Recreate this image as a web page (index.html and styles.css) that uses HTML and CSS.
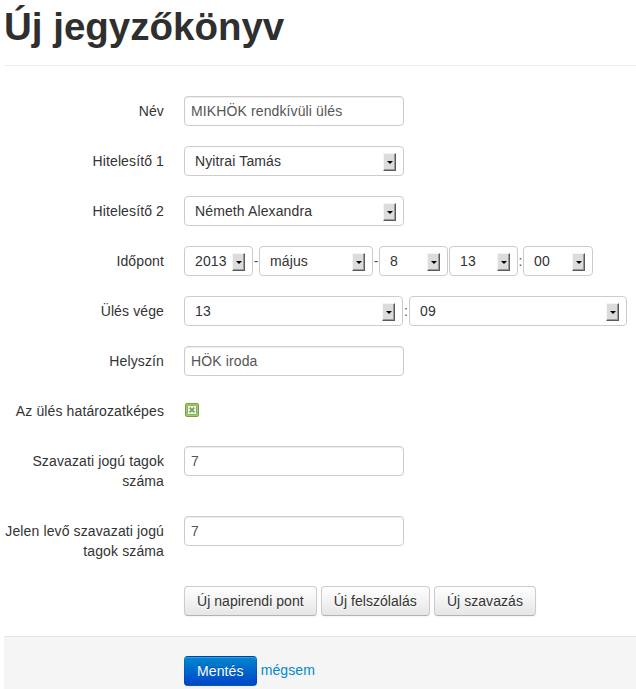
FILE: index.html
```html
<!DOCTYPE html>
<html lang="hu">
<head>
<meta charset="utf-8">
<title>Új jegyzőkönyv</title>
<link rel="stylesheet" href="styles.css">
</head>
<body>
<div class="page">
  <div class="page-header">
    <h1>Új jegyzőkönyv</h1>
  </div>
  <form class="form-horizontal">
    <div class="control-group">
      <label class="control-label">Név</label>
      <div class="controls"><div class="input">MIKHÖK rendkívüli ülés</div></div>
    </div>
    <div class="control-group">
      <label class="control-label">Hitelesítő 1</label>
      <div class="controls"><div class="select w220"><span class="val">Nyitrai Tamás</span><span class="arrow"></span></div></div>
    </div>
    <div class="control-group">
      <label class="control-label">Hitelesítő 2</label>
      <div class="controls"><div class="select w220"><span class="val">Németh Alexandra</span><span class="arrow"></span></div></div>
    </div>
    <div class="control-group">
      <label class="control-label">Időpont</label>
      <div class="controls inline">
        <div class="select w69"><span class="val">2013</span><span class="arrow"></span></div>
        <span class="sep">-</span>
        <div class="select w114"><span class="val">május</span><span class="arrow"></span></div>
        <span class="sep">-</span>
        <div class="select w69"><span class="val">8</span><span class="arrow"></span></div>
        <span class="sep sep-empty"></span>
        <div class="select w69"><span class="val">13</span><span class="arrow"></span></div>
        <span class="sep sep-colon">:</span>
        <div class="select w70"><span class="val">00</span><span class="arrow"></span></div>
      </div>
    </div>
    <div class="control-group">
      <label class="control-label">Ülés vége</label>
      <div class="controls inline">
        <div class="select w219"><span class="val">13</span><span class="arrow"></span></div>
        <span class="sep">:</span>
        <div class="select w218"><span class="val">09</span><span class="arrow"></span></div>
      </div>
    </div>
    <div class="control-group">
      <label class="control-label">Helyszín</label>
      <div class="controls"><div class="input">HÖK iroda</div></div>
    </div>
    <div class="control-group">
      <label class="control-label">Az ülés határozatképes</label>
      <div class="controls">
        <svg class="checkbox" width="14" height="14" viewBox="0 0 14 14">
          <rect x="0.5" y="0.5" width="13" height="13" rx="1.5" fill="#9fcb6b" stroke="#74a342"/>
          <rect x="2.5" y="2.5" width="9" height="9" rx="1" fill="#eef6e4" stroke="#88b458"/>
          <path d="M4.6 4.6 L9.4 9.4 M9.4 4.6 L4.6 9.4" stroke="#7d9c63" stroke-width="1.7"/>
        </svg>
      </div>
    </div>
    <div class="control-group">
      <label class="control-label">Szavazati jogú tagok száma</label>
      <div class="controls"><div class="input">7</div></div>
    </div>
    <div class="control-group">
      <label class="control-label">Jelen levő szavazati jogú tagok száma</label>
      <div class="controls"><div class="input">7</div></div>
    </div>
    <div class="control-group">
      <div class="controls buttons">
        <button type="button" class="btn">Új napirendi pont</button>
        <button type="button" class="btn">Új felszólalás</button>
        <button type="button" class="btn">Új szavazás</button>
      </div>
    </div>
    <div class="form-actions">
      <button type="button" class="btn btn-primary">Mentés</button>
      <a class="link" href="#">mégsem</a>
    </div>
  </form>
</div>
</body>
</html>
```

FILE: styles.css
```css
html, body {
  margin: 0;
  padding: 0;
  background: #fff;
}
body {
  font-family: "Liberation Sans", Arial, Helvetica, sans-serif;
  font-size: 14px;
  line-height: 20px;
  color: #333;
  letter-spacing: 0.12px;
}
.page {
  padding-left: 4px;
}
.page-header {
  padding-top: 7px;
  padding-bottom: 18px;
  border-bottom: 1px solid #eee;
  margin-bottom: 30px;
}
.page-header h1 {
  margin: 0;
  font-size: 38.5px;
  line-height: 40px;
  font-weight: bold;
  letter-spacing: 0;
  color: #2f2f2f;
}
.form-horizontal {
  margin: 0;
}
.control-group {
  display: flex;
  align-items: flex-start;
  margin-bottom: 20px;
}
.control-label {
  width: 160px;
  flex: none;
  padding: 5px 0;
  text-align: right;
  line-height: 20px;
  color: #333;
}
.controls {
  margin-left: 20px;
  min-height: 30px;
}
.control-group .buttons {
  margin-left: 180px;
}
.controls.inline {
  display: flex;
  align-items: center;
}
.input {
  box-sizing: border-box;
  width: 220px;
  height: 30px;
  padding: 4px 6px;
  border: 1px solid #ccc;
  border-radius: 4px;
  color: #555;
  line-height: 20px;
  box-shadow: inset 0 1px 1px rgba(0,0,0,0.075);
  background: #fff;
}
.select {
  box-sizing: border-box;
  height: 30px;
  border: 1px solid #ccc;
  border-radius: 4px;
  background: #fff;
  display: flex;
  align-items: center;
  padding-left: 10px;
  color: #333;
}
.select .val {
  flex: 1;
  white-space: nowrap;
  overflow: hidden;
}
.select .arrow {
  position: relative;
  flex: none;
  box-sizing: border-box;
  width: 13px;
  height: 18px;
  margin-right: 7px;
  margin-top: 1px;
  background: #dcdcdc;
  border-top: 1px solid #f4f4f4;
  border-left: 1px solid #f4f4f4;
  border-right: 1px solid #5a5a5a;
  border-bottom: 1px solid #5a5a5a;
  box-shadow: inset -1px -1px 0 #9a9a9a;
}
.select .arrow::after {
  content: "";
  position: absolute;
  left: 3px;
  top: 7px;
  width: 0;
  height: 0;
  border-left: 3px solid transparent;
  border-right: 3px solid transparent;
  border-top: 3px solid #000;
}
.w220 { width: 220px; }
.w219 { width: 219px; }
.w218 { width: 218px; }
.w114 { width: 114px; }
.w69 { width: 69px; }
.w70 { width: 70px; }
.sep {
  width: 6px;
  text-align: center;
  color: #555;
  flex: none;
  letter-spacing: 0;
}
.sep-empty { width: 1px; }
.sep-colon { width: 5px; }
.checkbox {
  display: block;
  margin-top: 7px;
  margin-left: 1px;
}
.btn {
  display: inline-block;
  box-sizing: border-box;
  height: 30px;
  padding: 4px 12px;
  margin: 0;
  font-family: inherit;
  font-size: 14px;
  line-height: 20px;
  letter-spacing: 0.05px;
  color: #333;
  text-align: center;
  vertical-align: middle;
  cursor: pointer;
  background-color: #f5f5f5;
  background-image: linear-gradient(to bottom, #ffffff, #e6e6e6);
  border: 1px solid #cccccc;
  border-bottom-color: #b3b3b3;
  border-radius: 4px;
  box-shadow: inset 0 1px 0 rgba(255,255,255,0.2), 0 1px 2px rgba(0,0,0,0.05);
  text-shadow: 0 1px 1px rgba(255,255,255,0.75);
}
.btn-primary {
  color: #fff;
  letter-spacing: 0.12px;
  text-shadow: 0 -1px 0 rgba(0,0,0,0.25);
  background-color: #006dcc;
  background-image: linear-gradient(to bottom, #0088cc, #0044cc);
  border-color: rgba(0,0,0,0.1) rgba(0,0,0,0.1) rgba(0,0,0,0.25);
}
.form-actions {
  padding: 19px 20px 20px 180px;
  margin: 0;
  background: #f5f5f5;
  border-top: 1px solid #e5e5e5;
  min-height: 40px;
}
.link {
  color: #0088cc;
  text-decoration: none;
}
```
